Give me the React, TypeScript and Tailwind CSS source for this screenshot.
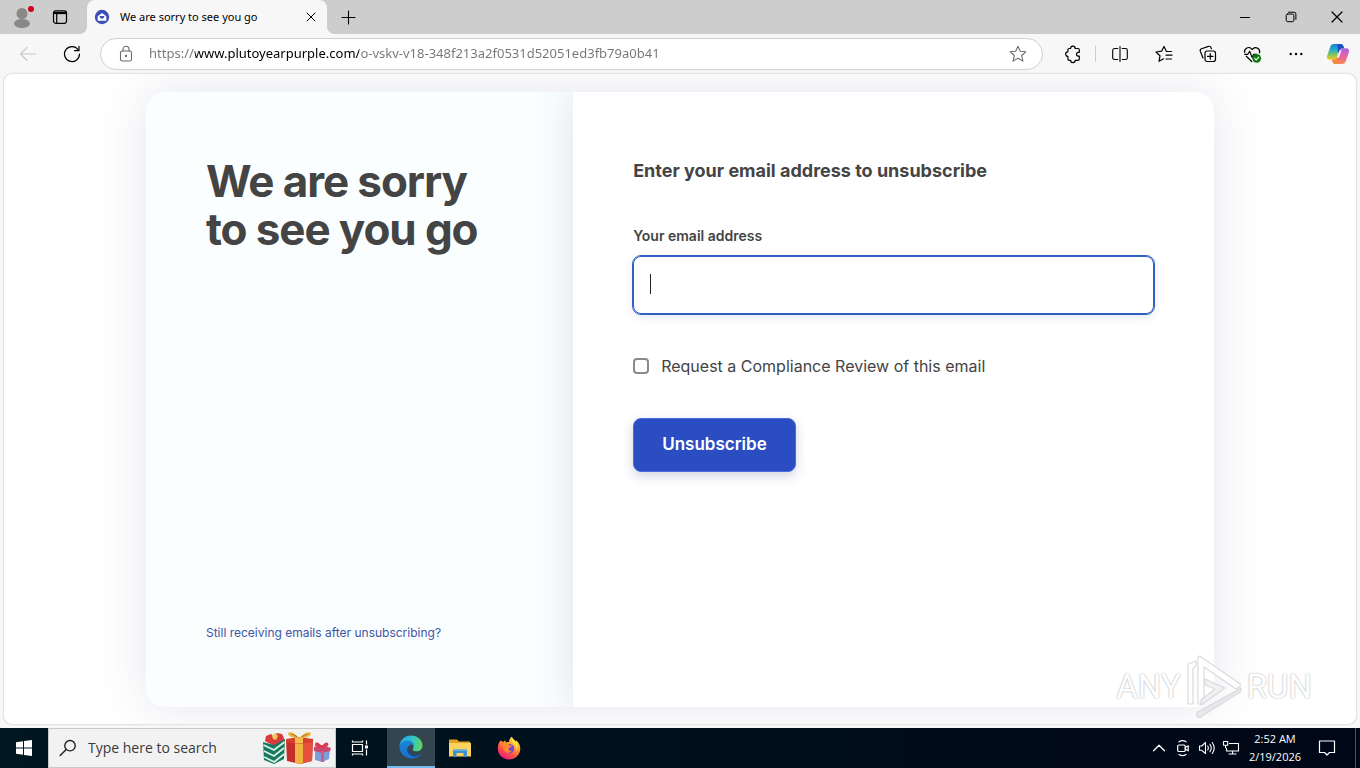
import React, { useState } from "react";

type IconProps = { className?: string };

const stroke = {
  fill: "none",
  stroke: "currentColor",
  strokeLinecap: "round" as const,
  strokeLinejoin: "round" as const,
};

/* ---------- Browser icons ---------- */

const ProfileIcon = () => (
  <svg viewBox="0 0 28 28" className="h-7 w-7">
    <circle cx="14" cy="10.500" r="5.500" fill="#8a8886" />
    <ellipse cx="14" cy="20.500" rx="8" ry="4.500" fill="#8a8886" />
    <circle cx="23" cy="6" r="4.500" fill="#cdcdcd" />
    <circle cx="23" cy="6" r="3" fill="#d0021b" />
  </svg>
);

const WorkspacesIcon = () => (
  <svg viewBox="0 0 16 16" className="h-4 w-4" {...stroke} strokeWidth="1.2">
    <rect x="1.500" y="1.800" width="13" height="12.500" rx="2.200" />
    <path d="M1.500 4h13" strokeWidth="2.200" strokeLinecap="butt" />
    <path d="M4.700 4.500v9.500" />
  </svg>
);

const SiteIcon = () => (
  <svg viewBox="0 0 16 16" className="h-4 w-4">
    <circle cx="8" cy="8" r="7.200" fill="#3c4fb4" />
    <path d="M3.700 7.200 8 4l4.300 3.200v4.600H3.700z" fill="#fff" />
    <path d="M5.700 7h4.600v1.300L8 9.900 5.700 8.300z" fill="#3c4fb4" />
  </svg>
);

const CloseIcon = ({ className = "h-4 w-4" }: IconProps) => (
  <svg viewBox="0 0 16 16" className={className} {...stroke} strokeWidth="1">
    <path d="m4 4 8 8M12 4l-8 8" />
  </svg>
);

const PlusIcon = () => (
  <svg viewBox="0 0 16 16" className="h-4 w-4" {...stroke} strokeWidth="1.1">
    <path d="M8.500 2v13M2 8.500h13" />
  </svg>
);

const BackIcon = () => (
  <svg viewBox="0 0 20 20" className="h-5 w-5" {...stroke} strokeWidth="1.1">
    <path d="M17.500 10h-15M9 3.500 2.500 10 9 16.500" />
  </svg>
);

const ReloadIcon = () => (
  <svg viewBox="0 0 20 20" className="h-5 w-5" {...stroke} strokeWidth="1.2">
    <path d="M16.300 6A7.500 7.500 0 1 0 17.500 10" />
    <path d="M17 2.300v4.400h-4.500" />
  </svg>
);

const LockIcon = () => (
  <svg viewBox="0 0 16 18" className="h-[18px] w-4" {...stroke} strokeWidth="1.1">
    <rect x="2.500" y="6" width="11" height="10" rx="1.800" />
    <path d="M5 6V4.200a3 3 0 0 1 6 0V6" />
    <circle cx="8" cy="11" r="0.600" fill="currentColor" />
  </svg>
);

const StarIcon = () => (
  <svg viewBox="0 0 20 20" className="h-5 w-5" {...stroke} strokeWidth="1.1">
    <path d="m10 2.200 2.300 5 5.500.6-4.100 3.700 1.200 5.600-4.900-2.900-4.900 2.900 1.200-5.600-4.100-3.700 5.500-.6z" />
  </svg>
);

const ExtensionIcon = () => (
  <svg viewBox="0 0 20 20" className="h-5 w-5" {...stroke} strokeWidth="1.2">
    <path d="M7.600 4.500a2.300 2.300 0 0 1 4.600 0h2.800a1.300 1.300 0 0 1 1.300 1.300v2.500h-.9a1.900 1.900 0 0 0 0 3.800h.9v2.900a1.300 1.300 0 0 1-1.300 1.300h-2.800a2.300 2.300 0 0 1-4.600 0H6.200A1.300 1.300 0 0 1 4.900 15v-2.600a2.300 2.300 0 0 1 0-4.600v-2a1.300 1.300 0 0 1 1.300-1.300z" />
  </svg>
);

const SplitIcon = () => (
  <svg viewBox="0 0 20 20" className="h-5 w-5" {...stroke} strokeWidth="1.1">
    <path d="M7.700 4.500H4.500A1.800 1.800 0 0 0 2.700 6.300v7.400A1.800 1.800 0 0 0 4.500 15.500h3.200M10 2.500v15M12.300 4.500h3.200a1.800 1.800 0 0 1 1.800 1.800v7.400a1.800 1.800 0 0 1-1.800 1.800h-3.200" />
  </svg>
);

const FavoritesIcon = () => (
  <svg viewBox="0 0 20 20" className="h-5 w-5" {...stroke} strokeWidth="1.2">
    <path d="M17.500 7.500h-5L10 2.500 7.600 7.200l-5.700.8L6 11.800 5 17.300l4.500-2.500M12 11.200h6M12 15h5.500" />
  </svg>
);

const CollectionsIcon = () => (
  <svg viewBox="0 0 20 20" className="h-5 w-5" {...stroke} strokeWidth="1.2">
    <rect x="7" y="7" width="10.500" height="10.500" rx="2.200" />
    <path d="M12.300 9.500v5.600M9.500 12.300h5.600" />
    <path d="M5 14 2.300 7.200a2 2 0 0 1 1.200-2.500l7-2.300a2 2 0 0 1 2.500 1.200l.4 1.200" />
  </svg>
);

const HealthIcon = () => (
  <svg viewBox="0 0 20 20" className="h-5 w-5" {...stroke} strokeWidth="1.2">
    <path d="M2.700 8.300a4 4 0 0 1 6.800-3.500l.7.700.7-.7a4 4 0 0 1 6.600 4M4.300 12.200l5.400 5.300" />
    <path d="M2.700 10.300h3.100L7.700 7.200l2.400 6.200 1.600-3.100h3" />
    <circle cx="14.700" cy="14.300" r="4.400" fill="#107c10" stroke="none" />
    <path d="m12.800 14.400 1.400 1.400 2.500-2.700" stroke="#fff" strokeWidth="1.1" />
  </svg>
);

const DotsIcon = () => (
  <svg viewBox="0 0 20 20" className="h-5 w-5" fill="currentColor">
    <circle cx="4.700" cy="10" r="1.200" />
    <circle cx="10" cy="10" r="1.200" />
    <circle cx="15.300" cy="10" r="1.200" />
  </svg>
);

const CopilotIcon = () => (
  <svg viewBox="0 0 24 24" className="h-6 w-6">
    <defs>
      <linearGradient id="cpA" x1="0" y1="0" x2="0" y2="1">
        <stop offset="0" stopColor="#1a7be0" />
        <stop offset=".4" stopColor="#2bb0c4" />
        <stop offset=".75" stopColor="#9acb45" />
        <stop offset="1" stopColor="#f7c81c" />
      </linearGradient>
      <linearGradient id="cpB" x1="0" y1="0" x2="0" y2="1">
        <stop offset="0" stopColor="#a862ea" />
        <stop offset=".5" stopColor="#e8609f" />
        <stop offset="1" stopColor="#fb8a5c" />
      </linearGradient>
    </defs>
    <path d="M17.500 4.500C17 2.800 16 2 14.500 2H7.800C6 2 4.900 3.200 4.200 5L1.200 13.500c-.9 2.600.4 4.300 2.900 4.300h3.200c1.800 0 2.800-1 3.400-2.700l2.300-7c.5-1.400 1.300-2 2.700-2h2.300z" fill="url(#cpA)" />
    <path d="M6.500 19.500C7 21.200 8 22 9.500 22h6.700c1.800 0 2.900-1.200 3.600-3l3-8.500c.9-2.600-.4-4.300-2.900-4.300h-3.200c-1.800 0-2.800 1-3.400 2.700l-2.300 7c-.5 1.400-1.300 2-2.700 2H6z" fill="url(#cpB)" />
    <path d="M11.500 2h3c1.500 0 2.500.8 3 2.500l.6 1.700h-1.400c-1.800 0-2.800 1-3.400 2.700L12 12z" fill="#1d4fbd" />
    <path d="M12.500 22h-3c-1.500 0-2.500-.8-3-2.500L6 17.800h1.300c1.800 0 2.800-1 3.400-2.700L12 12z" fill="#f58a35" />
    <path d="m13.600 8.200h2l-2.600 7.600h-2.200z" fill="#fff" opacity=".85" />
  </svg>
);

/* ---------- Taskbar icons ---------- */

const WindowsIcon = () => (
  <svg viewBox="0 0 16 16" className="h-4 w-4" fill="#fff">
    <path d="M0 2.200 7 1.200v6.300H0zM8 1.100 16 0v7.500H8zM0 8.500h7v6.300L0 13.800zM8 8.500h8V16l-8-1.100z" />
  </svg>
);

const SearchIcon = () => (
  <svg viewBox="0 0 18 18" className="h-[18px] w-[18px]" {...stroke} strokeWidth="1.4">
    <circle cx="11" cy="6.700" r="5.200" />
    <path d="m7.200 10.500-6 6" />
  </svg>
);

const GiftsIcon = () => (
  <svg viewBox="0 0 70 34" className="h-[34px] w-[70px]">
    <path d="M3 10 4 5l5-2 3 3 3-4 5 1 2 4v5l-10 3z" fill="#d83b3b" />
    <path d="m10 5 3-3 3 3-2 4-3-1z" fill="#f3c65b" />
    <path d="m1 11 11 3 11-6-1 20-10 5-10-4z" fill="#14795f" />
    <path d="m1.500 14 10.500 5 10.500-8M2 20l10 5 10-8M2.200 26l10 5 10-8" fill="none" stroke="#d9f2e6" strokeWidth="1.900" />
    <path d="m24 9 13 2 14-2-1 21-12 3-13-3z" fill="#c92d29" />
    <path d="m38 11 13-2-1 21-12 3z" fill="#e5513c" />
    <path d="m33 10h8v22l-3 1-5-1z" fill="#f0b541" />
    <path d="m24 8 13-2 14 2v3l-13 2-14-2z" fill="#d8402f" />
    <path d="m33 7 8-.500v5.500l-3 .5-5-.5z" fill="#f3be4d" />
    <path d="M37 7Q30-1 26 2q-1 4 11 6 13-2 12-6-4-3-12 5z" fill="#f0b541" />
    <path d="M29 3q4 1 6 3M46 3q-4 1-6 3" stroke="#b97a20" strokeWidth="1.200" fill="none" />
    <path d="m53 19 7 2 8-2-1 9-7 3-7-2z" fill="#7aa0dc" />
    <path d="m52 16 8-2 9 3-1 3-8 2-8-2z" fill="#c9486e" />
    <path d="M60 15q-7-7-7-1 0 2 7 3 8-1 6-5-3-2-6 3z" fill="#db3b4f" />
    <path d="M59 20h3v11h-3z" fill="#d35a86" />
  </svg>
);

const TaskViewIcon = () => (
  <svg viewBox="0 0 18 18" className="h-[18px] w-[18px]" {...stroke} strokeWidth="1.2" strokeLinecap="butt">
    <path d="M1.500 5.500h10v7h-10zM1.500 1.500v2M11.500 1.500v2M1.500 3h10M1.500 14.500v2M11.500 14.500v2M1.500 15h10" />
    <path d="M15.500 1.500v4M15.500 10.500v6" />
    <path d="M14 6.500h3v3h-3z" fill="currentColor" stroke="none" />
  </svg>
);

const EdgeIcon = () => (
  <svg viewBox="0 0 24 24" className="h-6 w-6">
    <defs>
      <linearGradient id="edTop" x1="0" y1=".4" x2="1" y2=".5">
        <stop offset="0" stopColor="#2a9fe0" />
        <stop offset=".5" stopColor="#2dc2d2" />
        <stop offset="1" stopColor="#62d957" />
      </linearGradient>
      <linearGradient id="edLow" x1="0" y1="0" x2="0" y2="1">
        <stop offset="0" stopColor="#1b84d8" />
        <stop offset="1" stopColor="#1972cf" />
      </linearGradient>
    </defs>
    <path d="M.5 10.500C1.300 4.500 6 .5 12 .5c6.500 0 11.500 4.800 11.500 10 0 3.700-2.800 5.800-5.800 5.800-2.700 0-4-.9-4-1.800 0-.7.900-1 .9-2.700 0-2.500-2.400-4.600-5.600-4.600-4 0-7.200 2-8.500 3.300z" fill="url(#edTop)" />
    <path d="M.5 10.500c2-3.600 5.300-5 8.500-5 3.700 0 6 2.600 5.900 5.600-.8-1.400-2.400-1.900-3.700-1.200-3 1.500-3.700 4.800-1.900 7.700 2.200 3.600 6.500 4.400 10.200 2.500l1.500-.7c.5-.2.800.2.500.6-2.300 2.500-5.500 3.700-9 3.500C5.500 23.200-.3 17.500.5 10.500z" fill="url(#edLow)" />
    <path d="M8.300 12.200c-1.200 5.500 3 9.800 8 9.600 1.800-.1 3.500-.8 5.200-2.200-3.500 1.800-8 1.200-10.500-1.400-1.700-1.800-2.600-3.800-2.700-6z" fill="#0f4f9e" />
  </svg>
);

const ExplorerIcon = () => (
  <svg viewBox="0 0 24 20" className="h-5 w-6">
    <path d="M1 1.500h8l2 2h11v14H1z" fill="#e5a01f" />
    <path d="M1 5h22v13.500H1z" fill="#fcd25e" />
    <path d="M5 11.500h14v7.500h-3.500v-4h-7v4H5z" fill="#3d8fd1" />
    <path d="M5 11.500h14v1.500H5z" fill="#63b0e6" />
  </svg>
);

const FirefoxIcon = () => (
  <svg viewBox="0 0 24 24" className="h-6 w-6">
    <defs>
      <linearGradient id="ffBody" x1=".8" y1="0" x2=".2" y2="1">
        <stop offset="0" stopColor="#ffe14a" />
        <stop offset=".35" stopColor="#ffa22b" />
        <stop offset=".7" stopColor="#ff4650" />
        <stop offset="1" stopColor="#e31587" />
      </linearGradient>
    </defs>
    <path d="M3.500 4.500 6.300 6 8 4.200l1 2.200c1-.4 2-.5 3-.4C12.200 3.500 13.200 1.800 15 .5c.2 2.500 2.200 3.500 3.800 5.300l.3-1.500c2.700 2 4.200 5 4.200 8.200 0 6.200-5 11-11.300 11S.8 18.700.8 12.600c0-3.300 1-6 2.700-8.100z" fill="url(#ffBody)" />
    <circle cx="12.300" cy="12.700" r="4.800" fill="#7542e5" />
    <path d="M5.700 8.500c2.500-1.800 4.800-1.500 6.800.8l2.800.3c-.4 1.700-3 1.600-3.600 3-.4 1.700 1 2.700 3.200 1.900-1 2.300-4 3.200-6.300 1.600-2.300-1.500-3.300-4.600-2.900-7.600z" fill="#ff8a2b" />
    <path d="M14.500 3.500c.5 4.500 5.500 5.500 4.700 11.500 2.200-3.500 1.800-8.500-1.200-10.500l-2.800-3z" fill="#fff04a" opacity=".7" />
  </svg>
);

const ChevronUpIcon = () => (
  <svg viewBox="0 0 16 16" className="h-4 w-4" {...stroke} strokeWidth="1.3">
    <path d="m2.500 10.700 5.500-5.500 5.500 5.500" />
  </svg>
);

const MeetNowIcon = () => (
  <svg viewBox="0 0 16 18" className="h-[18px] w-4" {...stroke} strokeWidth="1.2">
    <rect x="2.700" y="6" width="7.500" height="6.500" rx="1.300" />
    <path d="m10.200 8.500 3-1.700v5l-3-1.800M4 2.800q3.500-2.300 7 0M4 15.500q3.500 2.300 7 0" />
  </svg>
);

const SpeakerIcon = () => (
  <svg viewBox="0 0 18 16" className="h-4 w-[18px]" {...stroke} strokeWidth="1.1">
    <path d="M1.500 6v4.300h2.300L7.500 13.500v-11L3.800 6zM9.700 6q1.300 2 0 4M11.900 4.300q2.700 3.700 0 7.400M14.200 2.500q4 5.500 0 11" />
  </svg>
);

const NetworkIcon = () => (
  <svg viewBox="0 0 18 16" className="h-4 w-[18px]" {...stroke} strokeWidth="1.1" strokeLinecap="butt">
    <path d="M7 3.500h9.500v7.500h-12V8M10.500 11v2.800M6.500 14h8M1.500 1.500h4.200v3.700H1.500zM3.600 5.200v3" />
  </svg>
);

const NotificationIcon = () => (
  <svg viewBox="0 0 18 18" className="h-[18px] w-[18px]" {...stroke} strokeWidth="1.200">
    <path d="M1.500 2h15v11.500h-5l-2.500 2.500-2.500-2.500h-5z" />
  </svg>
);

const WatermarkMark = () => (
  <svg viewBox="0 0 58 66" className="h-[66px] w-[58px]" fill="#ffffff" stroke="#dadade" strokeWidth="1.200" strokeLinejoin="round">
    <path d="M3 50V10l8-3v5l-3 2v36z" />
    <path d="M13 4q0-3 3-1l38 26q3 2 0 4l-3 2L19 13v37h-6z" />
    <path d="m20 25 20 9-24 17v-5l14-11-10-4z" fill="#f1f1f3" />
    <path d="M56 34 13 58q-3 3 0 5 2 1 4-1l38-24q2-2 1-4z" fill="#e8e8eb" />
  </svg>
);

/* ---------- Browser chrome ---------- */

const TabStrip = () => (
  <header className="flex h-[34px] shrink-0 items-stretch bg-[#cdcdcd] text-black">
    <div className="flex w-[87px] items-center gap-3 pl-2">
      <button aria-label="Profile"><ProfileIcon /></button>
      <button aria-label="Workspaces" className="pl-1"><WorkspacesIcon /></button>
    </div>
    <div className="relative flex w-60 items-center gap-2.5 rounded-t-lg bg-[#f7f7f7] pr-2 pl-[7px]">
      <span className="absolute bottom-0 -left-2 h-2 w-2 bg-[radial-gradient(circle_at_0_0,#cdcdcd_8px,#f7f7f7_8px)]" />
      <span className="absolute -right-2 bottom-0 h-2 w-2 bg-[radial-gradient(circle_at_100%_0,#cdcdcd_8px,#f7f7f7_8px)]" />
      <SiteIcon />
      <span className="flex-1 truncate font-['Noto_Sans',sans-serif] text-[11px]">We are sorry to see you go</span>
      <button aria-label="Close tab"><CloseIcon /></button>
    </div>
    <button aria-label="New tab" className="flex w-[42px] items-center justify-center"><PlusIcon /></button>
    <div className="ml-auto flex">
      <button aria-label="Minimize" className="flex w-[46px] items-center justify-center">
        <span className="h-px w-2.5 bg-black" />
      </button>
      <button aria-label="Restore" className="flex w-[46px] items-center justify-center">
        <svg viewBox="0 0 12 12" className="h-3 w-3" {...stroke} strokeWidth="1">
          <rect x="1.200" y="3" width="7.700" height="7.700" rx="1.500" />
          <path d="M3.500 1.200H9a1.900 1.900 0 0 1 1.900 1.900v5.200" />
        </svg>
      </button>
      <button aria-label="Close" className="flex w-[46px] items-center justify-center"><CloseIcon className="h-5 w-5" /></button>
    </div>
  </header>
);

const tools = [
  { label: "Split screen", icon: SplitIcon },
  { label: "Favorites", icon: FavoritesIcon },
  { label: "Collections", icon: CollectionsIcon },
  { label: "Browser essentials", icon: HealthIcon },
  { label: "Settings and more", icon: DotsIcon },
];

const Toolbar = () => {
  const [url, setUrl] = useState("https://www.plutoyearpurple.com/o-vskv-v18-348f213a2f0531d52051ed3fb79a0b41");

  return (
    <nav className="flex h-10 shrink-0 items-center pr-0.5 text-black">
      <button aria-label="Back" className="flex w-[50px] justify-center pl-1.5 text-[#c8c8c8]"><BackIcon /></button>
      <button aria-label="Refresh" className="flex w-[50px] justify-center pr-1.5"><ReloadIcon /></button>
      <div className="flex h-8 flex-1 items-center gap-[15px] rounded-full border border-[#d0d0d0] bg-white pr-3.5 pl-[17px] text-[#6b6b6b]">
        <LockIcon />
        <input
          aria-label="Address"
          value={url}
          onChange={(e) => setUrl(e.target.value)}
          className="min-w-0 flex-1 bg-[linear-gradient(90deg,#767676_46px,#000_46px,#000_210px,#767676_210px)] bg-clip-text font-['Noto_Sans',sans-serif] text-[13px] text-transparent outline-none"
        />
        <button aria-label="Add to favorites"><StarIcon /></button>
      </div>
      <button aria-label="Extensions" className="ml-2 flex w-11 justify-center"><ExtensionIcon /></button>
      <span className="mr-0.5 h-4 w-px bg-[#cfcfcf]" />
      {tools.map((tool) => (
        <button key={tool.label} aria-label={tool.label} className="flex w-11 justify-center">
          <tool.icon />
        </button>
      ))}
      <button aria-label="Copilot" className="flex w-10 justify-center"><CopilotIcon /></button>
    </nav>
  );
};

/* ---------- Page ---------- */

const UnsubscribeCard = () => {
  const [email, setEmail] = useState("");
  const [review, setReview] = useState(false);

  return (
    <div className="flex w-[79%] overflow-hidden rounded-[20px] bg-white font-['Inter',sans-serif] text-[#444444] shadow-[0_0_50px_rgba(60,50,110,0.13)]">
      <section className="flex w-2/5 flex-col justify-between bg-[#fafeff] px-[60px] pt-[65px] pb-16">
        <h1 className="text-[44px] leading-[48px] font-bold tracking-tight">
          We are sorry
          <br />
          to see you go
        </h1>
        <a href="#help" className="text-xs leading-5 text-[#3f55a5]">Still receiving emails after unsubscribing?</a>
      </section>
      <form
        onSubmit={(e) => e.preventDefault()}
        className="flex flex-1 flex-col items-start bg-white px-[60px] pt-[65px] shadow-[0_0_40px_rgba(60,70,120,0.15)]"
      >
        <h2 className="text-lg leading-7 font-bold">Enter your email address to unsubscribe</h2>
        <label htmlFor="email" className="mt-10 text-sm leading-[22px] font-semibold">Your email address</label>
        <div className="relative mt-[9px] w-full">
          <input
            id="email"
            type="email"
            value={email}
            onChange={(e) => setEmail(e.target.value)}
            className="block h-[58px] w-full rounded-lg border border-[#3060c4] bg-white px-4 text-base caret-transparent shadow-[0_3px_10px_rgba(40,60,120,0.12)] outline-1 outline-[#3060c4]"
          />
          <span className="absolute top-[18px] left-[17px] h-5 w-px bg-[#222222]" />
        </div>
        <label className="mt-10 flex items-center gap-3 text-base leading-6">
          <input
            type="checkbox"
            checked={review}
            onChange={(e) => setReview(e.target.checked)}
            className="h-4 w-4 appearance-none rounded-[4px] border-2 border-[#8a8a8a] bg-white checked:bg-[#2b4ec4]"
          />
          Request a Compliance Review of this email
        </label>
        <button
          type="submit"
          className="mt-10 h-[54px] rounded-lg border border-[#4a6be0] bg-[#2b4dc2] px-7 text-[17px] font-semibold text-white shadow-[0_4px_12px_rgba(30,40,90,0.2)]"
        >
          Unsubscribe
        </button>
      </form>
    </div>
  );
};

const Watermark = () => (
  <div className="pointer-events-none absolute right-11 bottom-1 flex items-center gap-1 font-['Roboto',sans-serif] text-[33px] text-white [text-shadow:0_0_2px_#b4b4b8,0_0_1px_#c4c4c8]">
    <span>ANY</span>
    <WatermarkMark />
    <span>RUN</span>
  </div>
);

/* ---------- Taskbar ---------- */

const Taskbar = () => {
  const [query, setQuery] = useState("");

  return (
    <footer className="flex h-10 shrink-0 items-stretch bg-linear-to-r from-[#00171f] to-[#000717] font-['Open_Sans',sans-serif] text-white">
      <button aria-label="Start" className="flex w-12 items-center justify-center"><WindowsIcon /></button>
      <label className="flex w-72 items-center gap-[11px] border border-[#c8c8c8] bg-[#f2f2f2] pr-[3px] pl-2.5 text-[#1f1f1f]">
        <SearchIcon />
        <input
          aria-label="Search"
          placeholder="Type here to search"
          value={query}
          onChange={(e) => setQuery(e.target.value)}
          className="min-w-0 flex-1 bg-transparent text-sm outline-none placeholder:text-[#3a3a3a]"
        />
        <GiftsIcon />
      </label>
      <button aria-label="Task view" className="flex w-[51px] items-center justify-center pr-1"><TaskViewIcon /></button>
      <button aria-label="Edge" className="flex w-12 items-center justify-center border-b-2 border-[#76b9ed] bg-[#33454e]"><EdgeIcon /></button>
      <button aria-label="File Explorer" className="flex w-[49px] items-center justify-center"><ExplorerIcon /></button>
      <button aria-label="Firefox" className="flex w-[50px] items-center justify-center"><FirefoxIcon /></button>
      <div className="ml-auto flex items-stretch">
        <button aria-label="Show hidden icons" className="flex w-6 items-center justify-center"><ChevronUpIcon /></button>
        <button aria-label="Meet now" className="flex w-6 items-center justify-center"><MeetNowIcon /></button>
        <button aria-label="Volume" className="flex w-6 items-center justify-center"><SpeakerIcon /></button>
        <button aria-label="Network" className="flex w-6 items-center justify-center"><NetworkIcon /></button>
        <button className="w-16 text-center text-[11px] leading-[18px] whitespace-nowrap">
          2:52 AM
          <br />
          2/19/2026
        </button>
        <button aria-label="Notifications" className="flex w-12 items-center justify-center pr-2"><NotificationIcon /></button>
        <span className="w-[5px] border-l border-[#4b5560]" />
      </div>
    </footer>
  );
};

const App: React.FC = () => {
  return (
    <div className="flex h-screen flex-col overflow-hidden bg-[#f7f7f7]">
      <TabStrip />
      <Toolbar />
      <main className="relative mx-1 mb-1 flex flex-1 justify-center overflow-hidden rounded-lg bg-white pt-[18px] pb-[17px] shadow-[0_0_2px_rgba(0,0,0,0.3)]">
        <UnsubscribeCard />
        <Watermark />
      </main>
      <Taskbar />
    </div>
  );
};

export default App;
